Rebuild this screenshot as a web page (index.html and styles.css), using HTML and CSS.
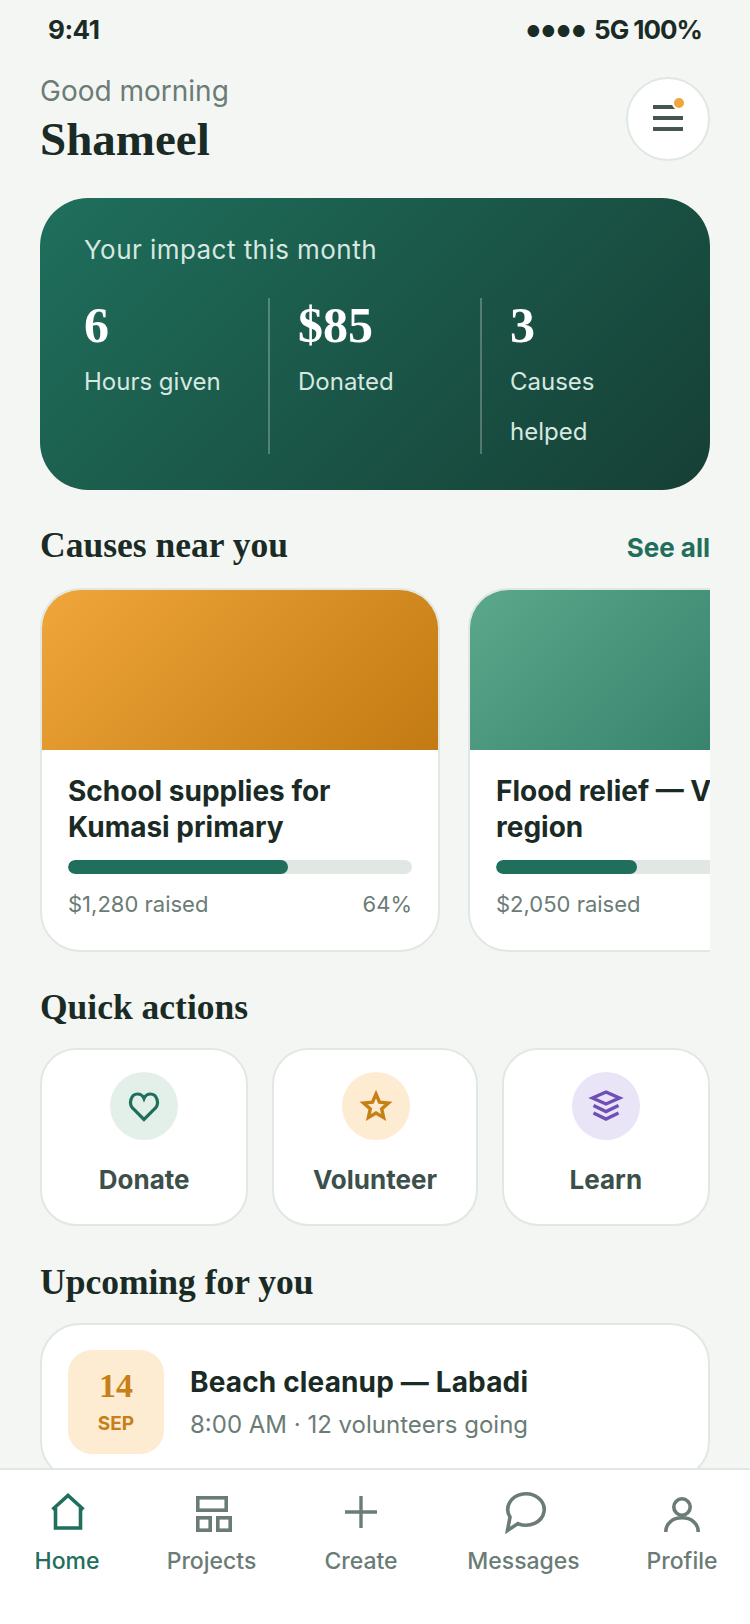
FILE: index.html
```html
<!DOCTYPE html>
<html lang="en">
<head>
    <meta charset="UTF-8">
    <meta name="viewport" content="width=device-width, initial-scale=1.0">
    <title>Home</title>
    <link rel="stylesheet" href="styles.css">
</head>
<body>
<div class="phone">
    <main class="scroll">
        <div class="status-bar">
            <span>9:41</span>
            <span class="status-right"><span class="signal">●●●●</span> 5G 100%</span>
        </div>

        <header class="top">
            <div>
                <p class="hello">Good morning</p>
                <h1 class="name">Shameel</h1>
            </div>
            <button class="menu-btn" aria-label="Menu">
                <span class="line"></span>
                <span class="line"></span>
                <span class="line"></span>
                <span class="dot"></span>
            </button>
        </header>

        <section class="impact">
            <p class="impact-title">Your impact this month</p>
            <div class="stats">
                <div class="stat">
                    <div class="stat-value">6</div>
                    <div class="stat-label">Hours given</div>
                </div>
                <div class="stat">
                    <div class="stat-value">$85</div>
                    <div class="stat-label">Donated</div>
                </div>
                <div class="stat">
                    <div class="stat-value">3</div>
                    <div class="stat-label">Causes helped</div>
                </div>
            </div>
        </section>

        <div class="section-head causes-head">
            <h2>Causes near you</h2>
            <a class="see-all" href="#">See all</a>
        </div>

        <div class="cause-list">
            <article class="cause">
                <div class="cause-img orange"></div>
                <div class="cause-body">
                    <h3>School supplies for<br>Kumasi primary</h3>
                    <div class="bar"><div class="bar-fill" style="width: 64%"></div></div>
                    <div class="cause-meta"><span>$1,280 raised</span><span>64%</span></div>
                </div>
            </article>
            <article class="cause">
                <div class="cause-img green"></div>
                <div class="cause-body">
                    <h3>Flood relief — Volta<br>region</h3>
                    <div class="bar"><div class="bar-fill" style="width: 41%"></div></div>
                    <div class="cause-meta"><span>$2,050 raised</span><span>41%</span></div>
                </div>
            </article>
        </div>

        <div class="section-head quick-head">
            <h2>Quick actions</h2>
        </div>

        <div class="quick-grid">
            <a class="tile" href="#">
                <span class="tile-icon bg-green">
                    <svg width="36" height="36" viewBox="0 0 36 36" fill="none" stroke="#1f6f5c" stroke-width="3.2">
                        <path d="M18 31.5 L6.5 20 C2.5 15.5 5 6 11.5 6 C14.5 6 17 8 18 10.5 C19 8 21.5 6 24.5 6 C31 6 33.5 15.5 29.5 20 Z"/>
                    </svg>
                </span>
                <span class="tile-label">Donate</span>
            </a>
            <a class="tile" href="#">
                <span class="tile-icon bg-orange">
                    <svg width="36" height="36" viewBox="0 0 36 36" fill="none" stroke="#c77f17" stroke-width="3.4">
                        <path d="M18 6 L21.5 14.1 L30.4 15 L23.7 20.9 L25.6 29.5 L18 25 L10.4 29.5 L12.3 20.9 L5.6 15 L14.5 14.1 Z"/>
                    </svg>
                </span>
                <span class="tile-label">Volunteer</span>
            </a>
            <a class="tile" href="#">
                <span class="tile-icon bg-purple">
                    <svg width="36" height="36" viewBox="0 0 36 36" fill="none" stroke="#6f4fb5" stroke-width="3.4">
                        <path d="M18 4 L31.5 10 L18 16 L4.5 10 Z"/>
                        <path d="M5.5 17.5 L18 23.5 L30.5 17.5"/>
                        <path d="M5.5 25 L18 31 L30.5 25"/>
                    </svg>
                </span>
                <span class="tile-label">Learn</span>
            </a>
        </div>

        <div class="section-head upcoming-head">
            <h2>Upcoming for you</h2>
        </div>

        <article class="event">
            <div class="event-date">
                <span class="event-day">14</span>
                <span class="event-month">SEP</span>
            </div>
            <div>
                <div class="event-title">Beach cleanup — Labadi</div>
                <div class="event-sub">8:00 AM · 12 volunteers going</div>
            </div>
        </article>
    </main>

    <nav class="tabbar">
        <a class="tab active" href="#">
            <svg width="48" height="48" viewBox="0 0 48 48" fill="none" stroke="currentColor" stroke-width="3.6">
                <path d="M9.5 21.5 L25 7.5 L40.5 21.5"/>
                <path d="M12.5 20 V40 H37.5 V20"/>
            </svg>
            <span>Home</span>
        </a>
        <a class="tab" href="#">
            <svg width="48" height="48" viewBox="0 0 48 48" fill="none" stroke="currentColor" stroke-width="3.6">
                <rect x="9.8" y="9.8" width="28.4" height="12.4"/>
                <rect x="9.8" y="29.8" width="12.4" height="12.4"/>
                <rect x="29.8" y="29.8" width="12.4" height="12.4"/>
            </svg>
            <span>Projects</span>
        </a>
        <a class="tab" href="#">
            <svg width="48" height="48" viewBox="0 0 48 48" fill="none" stroke="currentColor" stroke-width="3.4">
                <path d="M24 8 V40 M8 24 H40"/>
            </svg>
            <span>Create</span>
        </a>
        <a class="tab" href="#">
            <svg width="48" height="48" viewBox="0 0 48 48" fill="none" stroke="currentColor" stroke-width="3.6">
                <path d="M18 35.6 A18.2 15.7 0 1 0 10 29 L7.5 42.5 Z"/>
            </svg>
            <span>Messages</span>
        </a>
        <a class="tab" href="#">
            <svg width="48" height="48" viewBox="0 0 48 48" fill="none" stroke="currentColor" stroke-width="3.6">
                <circle cx="24" cy="19" r="8.2"/>
                <path d="M7.8 44 C7.8 35 15 29.8 24 29.8 S40.2 35 40.2 44"/>
            </svg>
            <span>Profile</span>
        </a>
    </nav>
</div>
</body>
</html>
```

FILE: styles.css
```css
* {
    box-sizing: border-box;
}
body {
    margin: 0;
    background-color: #f4f6f3;
    font-family: "Inter", "Noto Sans", sans-serif;
    color: #1a2b26;
}
a {
    text-decoration: none;
    color: inherit;
}
h1, h2, h3, p {
    margin: 0;
}
.phone {
    width: 750px;
    height: 1624px;
    display: flex;
    flex-direction: column;
    overflow: hidden;
}
.scroll {
    flex: 1;
    min-height: 0;
    overflow: hidden;
    padding: 0 40px;
}
.status-bar {
    height: 58px;
    margin: 0 8px;
    display: flex;
    align-items: center;
    justify-content: space-between;
    font-size: 26px;
    font-weight: 700;
    letter-spacing: -0.5px;
}
.status-right {
    letter-spacing: -1px;
}
.signal {
    font-size: 15.5px;
    letter-spacing: 1px;
    vertical-align: 2px;
    margin-right: 2px;
}
.top {
    margin-top: 13px;
    display: flex;
    align-items: center;
    justify-content: space-between;
}
.hello {
    font-size: 28px;
    line-height: 40px;
    color: #6b7c76;
}
.name {
    font-family: "Liberation Serif", serif;
    font-size: 47px;
    line-height: 56px;
    font-weight: 700;
}
.menu-btn {
    position: relative;
    width: 84px;
    height: 84px;
    padding: 0 0 2px;
    border: 2px solid #e1e8e4;
    border-radius: 50%;
    background-color: #fff;
    display: flex;
    flex-direction: column;
    align-items: center;
    justify-content: center;
    gap: 7px;
}
.line {
    width: 30px;
    height: 4px;
    background-color: #46564f;
}
.dot {
    position: absolute;
    left: 44px;
    top: 17px;
    width: 14px;
    height: 14px;
    border: 2px solid #fff;
    border-radius: 50%;
    background-color: #f0a63a;
}
.impact {
    margin-top: 31px;
    height: 292px;
    padding: 32px 44px 0;
    border-radius: 48px;
    background: linear-gradient(135deg, #1f6f5c, #163f35);
    color: #fff;
}
.impact-title {
    font-size: 26px;
    line-height: 40px;
    color: #d6e8e0;
    letter-spacing: 0.45px;
}
.stats {
    margin-top: 28px;
    display: grid;
    grid-template-columns: 156px 184px 1fr;
    gap: 28px;
}
.stat {
    height: 156px;
}
.stat + .stat {
    border-left: 2px solid rgba(255, 255, 255, 0.25);
    padding-left: 28px;
}
.stat-value {
    font-family: "Liberation Serif", serif;
    font-size: 50px;
    line-height: 54px;
    font-weight: 700;
}
.stat-label {
    margin-top: 5px;
    font-size: 24px;
    line-height: 50px;
    color: #d6e8e0;
}
.section-head {
    display: flex;
    align-items: center;
    justify-content: space-between;
}
.section-head h2 {
    font-family: "Liberation Serif", serif;
    font-size: 35.5px;
    line-height: 44px;
    font-weight: 700;
}
.causes-head {
    margin-top: 33px;
}
.quick-head {
    margin-top: 33px;
}
.upcoming-head {
    margin-top: 34px;
}
.see-all {
    margin-top: 4px;
    font-size: 26px;
    font-weight: 700;
    color: #1f6f5c;
}
.cause-list {
    margin-top: 21px;
    display: flex;
    gap: 28px;
    overflow: hidden;
}
.cause {
    flex: 0 0 400px;
    height: 364px;
    border: 2px solid #e1e8e4;
    border-radius: 40px;
    background-color: #fff;
    overflow: hidden;
}
.cause-img {
    height: 160px;
}
.cause-img.orange {
    background: linear-gradient(135deg, #f0a63a, #c27a12);
}
.cause-img.green {
    background: linear-gradient(135deg, #5ba88c, #2a7561);
}
.cause-body {
    padding: 23px 26px 0;
}
.cause-body h3 {
    font-size: 28px;
    line-height: 36px;
    font-weight: 700;
    white-space: nowrap;
}
.bar {
    margin-top: 15px;
    height: 14px;
    border-radius: 7px;
    background-color: #e1e8e4;
    overflow: hidden;
}
.bar-fill {
    height: 100%;
    border-radius: 7px;
    background-color: #1f6f5c;
}
.cause-meta {
    margin-top: 12px;
    display: flex;
    justify-content: space-between;
    font-size: 22px;
    line-height: 36px;
    color: #6b7c76;
}
.quick-grid {
    margin-top: 19px;
    display: grid;
    grid-template-columns: 208fr 205fr 208fr;
    gap: 24px;
}
.tile {
    height: 178px;
    padding-top: 22px;
    border: 2px solid #e1e8e4;
    border-radius: 36px;
    background-color: #fff;
    display: flex;
    flex-direction: column;
    align-items: center;
}
.tile-icon {
    width: 68px;
    height: 68px;
    border-radius: 50%;
    display: flex;
    align-items: center;
    justify-content: center;
}
.tile:nth-child(2) .tile-icon {
    margin-left: 2px;
}
.bg-green {
    background-color: #e3efe9;
}
.bg-orange {
    background-color: #fdecd2;
}
.bg-purple {
    background-color: #e9e4f6;
}
.tile-label {
    margin-top: 22px;
    font-size: 26px;
    line-height: 36px;
    font-weight: 700;
    color: #3d4f4a;
}
.event {
    margin-top: 19px;
    padding: 25px 26px;
    border: 2px solid #e1e8e4;
    border-radius: 40px;
    background-color: #fff;
    display: flex;
    align-items: center;
    gap: 26px;
}
.event-date {
    width: 96px;
    height: 104px;
    border-radius: 24px;
    background-color: #fdecd2;
    color: #c77f17;
    display: flex;
    flex-direction: column;
    align-items: center;
    justify-content: center;
}
.event-day {
    font-family: "Liberation Serif", serif;
    font-size: 34px;
    line-height: 40px;
    font-weight: 700;
}
.event-month {
    margin-top: 3px;
    font-size: 19px;
    line-height: 30px;
    font-weight: 700;
}
.event-title {
    margin-top: 2px;
    font-size: 28px;
    line-height: 42px;
    font-weight: 700;
    letter-spacing: 0.15px;
}
.event-sub {
    margin-top: 1px;
    font-size: 24px;
    line-height: 42px;
    color: #6b7c76;
}
.tabbar {
    flex: 0 0 156px;
    border-top: 2px solid #e1e8e4;
    background-color: #fff;
    display: grid;
    grid-template-columns: 134px 155px 144px 181px 136px;
}
.tab {
    padding-top: 18px;
    display: flex;
    flex-direction: column;
    align-items: center;
    font-size: 23px;
    line-height: 34px;
    font-weight: 500;
    color: #6b7c76;
}
.tab span {
    margin-top: 8px;
}
.tab.active {
    color: #1f6f5c;
}
```
